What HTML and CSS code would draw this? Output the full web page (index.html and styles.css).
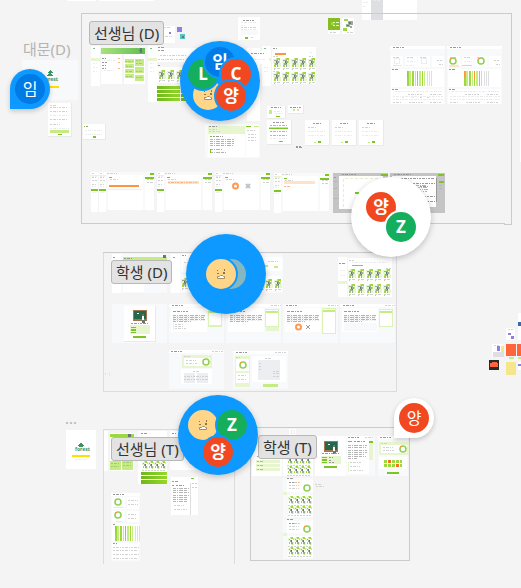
FILE: index.html
```html
<!DOCTYPE html>
<html lang="ko">
<head>
<meta charset="utf-8">
<title>디자인 캔버스</title>
<link rel="stylesheet" href="styles.css">
</head>
<body>
<main class="canvas">
<svg class="board" width="521" height="588" aria-hidden="true">
<defs>
<linearGradient id="banner"><stop offset="0" stop-color="#a9e27c"/><stop offset="1" stop-color="#62bd55"/></linearGradient>
<linearGradient id="bar"><stop offset="0" stop-color="#6fb81b"/><stop offset="1" stop-color="#94d82c"/></linearGradient>
<symbol id="book" viewBox="0 0 8 12" width="8" height="12">
<path class="lime" d="M4 0h3v2H4zM1 7h2v2H1zM5 7h2v1H5z"/><path class="soft" d="M0 1h3v4H0zM5 5h3v4H5z"/><path class="mid" d="M3 0h1v2H3zM6 2h1v3H6zM1 5h1v2H1z"/>
<path class="cover" d="M1 2h2v1H1zM3 2h2v3H3zM2 5h3v2H2zM5 3h1v2H5zM4 7h1v2H4z"/><path class="ink" d="M3 3h1v2H3zM4 5h1v1H4z"/><path class="tx" d="M1 10.500h6"/><path class="red" d="M1 11h1v1H1z"/>
</symbol>
<symbol id="books" viewBox="0 0 44 12" width="44" height="12"><use href="#book"/><use href="#book" x="9"/><use href="#book" x="18"/><use href="#book" x="26"/><use href="#book" x="35"/></symbol>
<symbol id="books4" viewBox="0 0 26 11" width="26" height="11">
<g id="b"><path class="lime" d="M3 0h2v2H3zM1 5h1v2H1z"/><path class="soft" d="M0 1h3v3H0zM3 5h3v3H3z"/><path class="mid" d="M2 0h1v1H2zM5 1h1v2H5zM4 6h1v2H4z"/><path class="cover" d="M1 2h1v1H1zM2 3h2v2H2zM3 5h2v2H3z"/><path class="ink" d="M3 3h1v2H3z"/><path class="tx" d="M0 9.500h5"/></g>
<use href="#b" x="6"/><use href="#b" x="12"/><use href="#b" x="18"/>
</symbol>
<symbol id="side" viewBox="0 0 9 40" width="9" height="40"><path class="w" d="M0 0h9v40H0z"/><path class="soft" d="M0 12h9v3H0z"/><path class="deep" d="M2 2h2v1H2z"/><path class="tx faint" d="M2 13.500h4M2 17.500h4M2 21.500h4M2 25.500h4"/></symbol>
<symbol id="chart" viewBox="0 0 26 15" width="26" height="15">
<path class="lime" d="M1 0h2v15H1zM6 0h2v15H6zM11 0h1v15h-1zM16 0h1v15h-1z"/><path class="mid" d="M3 0h2v15H3zM9 0h1v15H9zM13 0h2v15h-2zM18 0h1v15h-1z"/>
<path class="or" d="M1 0h1v7H1zM11 0h1v9h-1z"/><path class="gr" d="M21 0h1v15h-1zM23 0h1v15h-1zM25 0h1v15h-1z"/>
</symbol>
<symbol id="dash" viewBox="0 0 55 60" width="55" height="60">
<path class="p" d="M0 0h55v58H0z"/><path class="w" d="M0 0h55v3H0zM1 10h12v11H1zM15 10h12v11H15zM28 10h12v11H28zM42 10h12v11H42zM1 23h53v18H1zM1 43h53v15H1z"/>
<path class="tx dark" d="M3 1.500h11M2 23.500h7M2 43.500h6"/><path class="tx" d="M3 11.500h7M17 11.500h7M30 11.500h7M47 14.500h5M49 18.500h4M18 48.500h14M40 48.500h12M3 56.500h8M19 56.500h14M40 56.500h12"/><path class="tx faint" d="M17 15.500h8M16 19.500h8M5 45.500h47M3 50.500h50M3 53.500h50"/>
<use href="#chart" x="16" y="25"/>
</symbol>
<symbol id="ring" viewBox="0 0 8 8" width="8" height="8"><circle class="rg" cx="4" cy="4" r="3"/><path class="or" d="M1 1h2v1H1z"/></symbol>
<symbol id="form" viewBox="0 0 26 27" width="26" height="27"><path class="shade" d="M0 0h25v26H0z"/><path class="w" d="M0 0h24v25H0z"/><path class="tx dark" d="M8 3.500h8"/><path class="tx" d="M3 7.500h9"/><path class="tx faint" d="M3 11.500h18M3 15.500h18M3 11.500h4"/><path class="green" d="M13 21h3v2h-3z"/><path class="mid" d="M9 22h2v1H9z"/></symbol>
<symbol id="tools" viewBox="0 0 7 40" width="7" height="40"><path class="w" d="M0 0h7v40H0z"/><path class="tx" d="M1 1.500h3M1 5.500h4M1 8.500h5M1 12.500h4"/><path class="tx faint" d="M1 4.500h5M1 14.500h4M1 20.500h4"/><path class="soft" d="M0 3h7v1H0z"/><path class="green" d="M0 17h7v2H0z"/></symbol>
<symbol id="quiz" viewBox="0 0 55 40" width="55" height="40"><use href="#tools"/><path class="p" d="M7 0h48v38H7z"/><path class="w" d="M9 3h35v35H9zM46 3h9v35h-9z"/><path class="tx" d="M8 1.500h10M11 7.500h9M48 7.500h6M48 10.500h6"/><path class="green" d="M51 1h4v2h-4zM46 5h9v2h-9zM10 5h3v1h-3z"/></symbol>
<symbol id="reader" viewBox="0 0 55 40" width="55" height="40"><path class="p" d="M0 0h55v39H0z"/><path class="w" d="M0 0h55v3H0zM2 4h36v24H2z"/><path class="tx dark" d="M3 1.500h11M5 7.500h14"/><path class="green" d="M4 7h3v1H4z"/><path class="tx" d="M45 1.500h10"/><path class="tx dense" d="M4 11.500h32M4 13.500h31M4 15.500h32M4 17.500h18"/><path class="tx faint" d="M4 12.500h32M4 14.500h31M4 16.500h32"/><path class="edge" d="M39.500 5.500h13v17h-13z"/><path class="mid" d="M40 7h12v2H40z"/></symbol>
<symbol id="score" viewBox="0 0 30 13" width="30" height="13"><path class="soft" d="M0 0h30v13H0z"/><path class="w" d="M2 3h26v8H2z"/><path class="tx" d="M2 1.500h7M4 5.500h10M4 8.500h11"/><use href="#ring" x="20" y="3"/></symbol>
<symbol id="chalk" viewBox="0 0 15 13" width="15" height="13"><path class="wood" d="M0 0h14v11H0z"/><path class="chalk" d="M1 1h12v8H1z"/><path class="w" d="M4 3h2v1H4zM9 5h2v5H9z"/><path class="ink" d="M9 4h2v2H9zM9 10h3v3H9z"/></symbol>
<symbol id="lesson" viewBox="0 0 31 40" width="31" height="40"><path class="w" d="M0 0h31v40H0z"/><use href="#chalk" x="9" y="5"/><path class="tx dark" d="M7 17.500h17"/><path class="soft" d="M6 20h20v8H6z"/><path class="green" d="M7 21h5v1H7zM7 23h5v2H7zM7 26h5v1H7zM9 30h13v2H9z"/><path class="tx dark" d="M14 21.500h4M14 24.500h3M14 26.500h5"/></symbol>
<symbol id="report" viewBox="0 0 30 40" width="30" height="40"><path class="p" d="M0 0h30v40H0z"/><path class="w" d="M4 2h26v12H4zM5 17h25v22H5z"/><path class="tx dark" d="M4 .5h7"/><path class="tx" d="M6 4.500h12M6 7.500h10M6 10.500h10"/><use href="#ring" x="20" y="6"/><use href="#books4" x="5" y="18"/><use href="#books4" x="5" y="28"/><path class="soft" d="M0 14h4v3H0z"/></symbol>
</defs>

<!-- loose frames round the sections -->
<path class="w" d="M67 0h29v1H67zM99 0h55v1H99zM362 0h55v20h-55zM520 30h1v132h-1z"/><path class="gr" d="M371 0h12v20h-12z"/><path class="tx faint" d="M363 2.500h5M363 6.500h3M374 .5h6"/>
<path class="p" d="M22 60h56v40H22z"/>
<g class="leaf"><path d="M50 70l3 3h-2l2 3h-6l2-3h-2z"/><text class="brand" x="43" y="81">forest</text><path class="yl" d="M40 86h19v2H40z"/></g>
<path class="shade" d="M48 103h24v34H48z"/><path class="w" d="M48 103h23v33H48z"/><path class="tx" d="M50 105.500h6M50 107.500h18M50 111.500h18M50 119.500h18M50 124.500h10"/><path class="tx faint" d="M50 115.500h19M50 128.500h19"/><path class="mid" d="M50 130h19v3H50z"/><path class="green" d="M58 134h4v1h-4z"/>
<path class="w" d="M66 430h30v39H66z"/><g class="leaf"><path d="M81 442l3 4h-6zM79 445h4v2h-4z"/><text class="brand" x="75" y="451">forest</text><path class="yl" d="M72 455h18v2H72z"/></g><path class="tx faint" d="M75 459.500h12"/>

<!-- section 1 -->
<path class="sec" d="M81.500 223.500V13.500H511.500V224.500H504V223.500z"/>
<path class="w" d="M160 26h15v17h-15z"/><path class="violet" d="M169 32h2v2h-2zM177 27h5v5h-5z"/><path class="tx" d="M162 36.500h10M164 27.500h6"/><path class="teal" d="M180 34h5v5h-5z"/><path class="ink" d="M182 36h2v2h-2z"/>
<use href="#side" x="91" y="46"/><path fill="url(#banner)" d="M101 48h44v6h-44z"/><path class="ink" d="M140 48h2v5h-2zM139 50h2v1h-2z"/>
<path class="w" d="M101 54h21v30h-21zM124 54h21v30h-21z"/><path class="tx dark" d="M102 58.500h4M102 62.500h5M102 65.500h4M102 68.500h4"/><path class="tx orange" d="M118 58.500h3M118 62.500h3M118 68.500h3"/><path class="tx faint" d="M104 60.500h12M104 70.500h10"/>
<path class="mid" d="M125 59h9v4h-9zM125 64h9v4h-9zM125 69h9v4h-9zM125 74h9v4h-9zM135 59h9v7h-9zM135 67h9v6h-9zM135 75h9v6h-9z"/><path class="tx green-tx" d="M125 61.500h8M126 66.500h7M126 71.500h6M126 76.500h6M136 60.500h5M136 63.500h7M136 71.500h7M136 77.500h6"/>
<use href="#side" x="148" y="46"/><path class="w" d="M148 85h9v17h-9zM157 48h60v14h-60zM157 67h60v16h-60z"/><path class="tx dark" d="M158 47.500h7M158 50.500h7M158 65.500h3"/><path class="tx" d="M160 55.500h26M158 59.500h26"/><use href="#books" x="158" y="70"/><path fill="url(#bar)" d="M157 86h23v3h-23zM157 90h23v3h-23zM157 94h23v3h-23zM157 98h23v3h-23z"/><path fill="url(#bar)" d="M181 86h23v3h-23zM181 90h23v3h-23zM181 94h23v3h-23zM181 98h23v3h-23z"/>
<path class="w" d="M238 17h22v23h-22z"/><path class="tx dark" d="M243 20.500h12"/><path class="tx faint" d="M241 22.500h16M241 25.500h4M241 29.500h16"/><path class="tx" d="M241 27.500h16"/><path class="p" d="M241 30h17v5h-17z"/><path class="green" d="M245 37h3v2h-3z"/><path class="mid" d="M251 37h2v1h-2z"/>
<path class="w" d="M328 18h12v16h-12zM342 18h12v16h-12z"/><path class="green2" d="M328 18h12v12h-12z"/><path class="lime" d="M331 22h3v3h-3zM344 19h4v2h-4zM343 28h4v3h-4z"/><path class="tx white" d="M333 22.500h6M333 25.500h6"/><path class="cover" d="M348 21h5v4h-5zM346 24h4v3h-4zM350 26h2v2h-2z"/><path class="ink" d="M349 22h2v2h-2zM347 25h2v1h-2z"/><path class="tx" d="M330 32.500h7M347 32.500h6"/>
<path class="w" d="M247 48h13v14h-13zM247 63h13v58h-13zM240 51h29v13h-29z"/><use href="#side" x="262" y="46"/><path class="w" d="M272 47h44v37h-44zM247 51h22v13h-22z"/><path class="tx dark" d="M251 53.500h13M273 48.500h4"/><path class="tx faint" d="M249 67.500h8M249 72.500h8M249 80.500h8M310 52.500h3M250 59.500h16"/><path class="or" d="M275 53h11v2h-11z"/><path class="tx" d="M273 56.500h5M309 56.500h4M273 71.500h6"/><use href="#books" x="273" y="58"/><use href="#books" x="273" y="72"/>
<use href="#dash" x="390" y="46"/><use href="#dash" x="447" y="46"/><use href="#ring" x="449" y="57"/><use href="#ring" x="477" y="57"/><path class="soft-or" d="M393 65h9v1h-9zM449 65h10v2h-10zM402 97h2v1h-2zM412 97h2v1h-2z"/><path class="mid" d="M420 97h2v1h-2zM427 97h2v1h-2zM462 65h10v1h-10z"/><circle class="faint-ring" cx="397" cy="61" r="3"/><circle class="faint-ring" cx="424" cy="61" r="3"/>
<path class="shade" d="M83 124h23v16H83z"/><path class="w" d="M83 124h22v15H83z"/><path class="green" d="M84 126h1v1h-1zM93 136h3v2h-3z"/><path class="tx dark" d="M86 126.500h3"/><path class="tx faint" d="M85 130.500h18M85 134.500h18"/>
<path class="shade" d="M267 106h19v13h-19zM288 105h16v9h-16zM267 120h25v25h-25z"/><path class="w" d="M267 106h18v12h-18zM288 105h15v8h-15zM267 120h24v24h-24z"/><path class="tx dark" d="M271 107.500h10M290 107.500h11M273 122.500h11"/><path class="mid" d="M269 110h3v4h-3zM269 127h19v2h-19zM293 109h2v2h-2z"/><path class="green" d="M276 116h4v1h-4zM269 128h19v1h-19zM279 141h4v1h-4z"/><path class="tx green-tx" d="M270 125.500h17M270 131.500h17M270 135.500h17"/><path class="tx faint" d="M274 111.500h9M275 113.500h8M270 138.500h17"/><path class="pink" d="M297 109h2v2h-2z"/>
<use href="#form" x="305" y="120"/><use href="#form" x="332" y="120"/><use href="#form" x="359" y="120"/><path class="tx dark" d="M296 146.500h5M296 147.500h6"/>
<path class="p" d="M205 124h55v34h-55z"/><path class="w" d="M208 134h37v23h-37zM246 125h13v32h-13z"/><path class="soft" d="M208 126h37v8h-37z"/><path class="tx dark" d="M209 126.500h8M213 136.500h10"/><path class="tx dense" d="M210 139.500h24M210 141.500h24M210 143.500h24M210 145.500h23M210 149.500h12M210 152.500h17"/><path class="tx" d="M209 129.500h8M209 131.500h12M247 130.500h8M248 134.500h9M248 137.500h9M248 140.500h9"/><path class="green" d="M246 126h5v1h-5zM210 136h2v1h-2zM210 149h1v4h-1z"/><path class="mid" d="M254 126h5v1h-5z"/>
<use href="#tools" x="91" y="172"/><use href="#quiz" x="99" y="172"/><use href="#quiz" x="157" y="172"/><use href="#quiz" x="215" y="172"/><use href="#quiz" x="274" y="173"/>
<path class="or" d="M109 185h30v2h-30z"/><path class="soft-or" d="M168 181h31v3h-31zM284 181h31v3h-31z"/><path class="tx orange" d="M284 186.500h7M168 182.500h29"/><path class="soft" d="M108 189h34v1h-34z"/><circle class="oring" cx="235.500" cy="186" r="2.500"/><path class="cross" d="M246 184l4 4m0-4l-4 4"/>
<path class="dim" d="M333 173h55v40h-55zM390 173h55v40h-55z"/><path class="w" d="M339 176h44v33h-44zM392 176h44v31h-44z"/><path class="tx dark" d="M342 174.500h14M394 174.500h18M401 178.500h34M404 183.500h31M420 186.500h8M400 196.500h35M400 201.500h35"/><path class="green" d="M381 174h7v2h-7zM438 174h6v2h-6zM334 177h2v1h-2zM355 192h4v2h-4zM439 181h5v2h-5z"/><path class="tx dense" d="M416 185.500h11M417 187.500h11M418 189.500h10M419 191.500h8M334 181.500h4M334 188.500h4M334 198.500h5M439 185.500h4M439 188.500h4"/><path class="dash" d="M343.500 207V178.500H378"/><path class="stroke" d="M436.500 178v24"/>

<!-- section 2 -->
<path class="sec light" d="M103.500 252.500V391.500H396.500V252.500"/><path class="sec" d="M103 252.500H397"/>
<path class="p" d="M112 254h55v39h-55zM170 254h55v39h-55zM228 254h55v39h-55z"/><path class="w" d="M112 254h9v39h-9zM123 262h21v30h-21zM171 254h9v39h-9zM181 254h44v18h-44zM181 275h44v17h-44zM262 257h20v14h-20zM262 276h20v15h-20z"/><path class="mid" d="M123 257h44v3h-44zM265 265h3v2h-3zM274 266h4v2h-4z"/><path class="ink" d="M163 255h3v3h-3z"/><path class="tx dark" d="M113 257.500h3M124 258.500h8M173 257.500h3M182 255.500h4"/><path class="tx" d="M184 262.500h9M268 261.500h10M183 285.500h6"/><use href="#books" x="181" y="278"/><use href="#books" x="239" y="279"/>
<path class="w" d="M338 257h9v40h-9zM348 258h44v39h-44z"/><path class="tx dark" d="M339 263.500h7"/><path class="tx" d="M349 260.500h5M350 269.500h5M386 268.500h5"/><path class="tx faint" d="M340 270.500h5M340 275.500h5M352 262.500h36"/><path class="or" d="M352 265h11v1h-11z"/><path class="soft" d="M338 281h9v3h-9z"/><use href="#books" x="348" y="269"/><use href="#books" x="348" y="284"/>
<path class="p" d="M112 304h55v39h-55z"/><path class="shade" d="M124 306h32v36h-32z"/><path class="w" d="M124 306h31v35h-31z"/><use href="#chalk" x="133" y="310"/><path class="tx dark" d="M131 323.500h17M138 327.500h3M138 330.500h3M138 332.500h4"/><path class="soft" d="M130 325h20v9h-20z"/><path class="green" d="M131 327h5v1h-5zM131 329h5v2h-5zM131 332h5v1h-5zM133 336h13v2h-13z"/>
<use href="#reader" x="169" y="304"/><use href="#reader" x="226" y="304"/><use href="#reader" x="283" y="304"/><use href="#reader" x="340" y="304"/><path class="tx" d="M175 324.500h9M175 326.500h8M175 328.500h12"/><path class="soft" d="M173 323h1v7h-1zM266 327h13v4h-13z"/><path class="edge" d="M322.500 308.500h13v25h-13zM208.500 309.500h13v16h-13z"/><path class="mid" d="M323 310h12v2h-12zM209 311h12v2h-12z"/><circle class="oring" cx="298.500" cy="327" r="2.500"/><path class="cross dark-x" d="M306 325l4 4m0-4l-4 4"/><path class="p" d="M344 323h33v8h-33z"/>
<path class="p" d="M169 350h55v39h-55zM233 351h55v38h-55z"/><path class="w" d="M169 350h55v3h-55zM181 369h31v15h-31zM233 351h55v3h-55zM252 356h34v26h-34z"/><path class="tx dark" d="M171 351.500h12M236 352.500h11"/><path class="tx" d="M212 351.500h11M275 352.500h11M193 371.500h7M265 358.500h7"/><use href="#score" x="182" y="355"/><path class="tint" d="M184 373h11v10h-11zM197 373h11v10h-11zM258 360h22v20h-22z"/><path class="tx" d="M184 376.500h24M184 379.500h24M259 363.500h2M259 366.500h2M259 369.500h2M273 371.500h6M273 373.500h6M273 376.500h6"/><path class="soft" d="M235 356h15v31h-15z"/><path class="w" d="M236 359h13v12h-13zM236 373h13v10h-13z"/><use href="#ring" x="239" y="361"/><path class="tx" d="M236 357.500h4M238 375.500h9M238 379.500h9"/><path class="mid" d="M263 384h15v3h-15z"/><path class="soft-or" d="M109 372h1v4h-1z"/><path class="gr" d="M105 373h1v2h-1z"/>

<!-- section 3 -->
<path class="sec light" d="M103.500 564V429.500H234.500V564"/>
<path class="w" d="M104 431h4v40h-4zM110 433h24v38h-24zM138 431h29v53h-29zM170 431h29v39h-29z"/><path class="lime" d="M110 434h24v3h-24z"/><path class="ink" d="M128 434h3v4h-3z"/><path class="mid" d="M110 461h11v9h-11zM122 461h11v9h-11z"/><path class="tx green-tx" d="M111 463.500h9M111 466.500h8M123 462.500h9M123 465.500h8"/><path class="tx dark" d="M141 433.500h6M172 433.500h4"/><use href="#books4" x="142" y="461"/><path fill="url(#bar)" d="M141 472h26v3h-26zM141 476h26v3h-26zM141 480h26v4h-26z"/>
<path class="w" d="M171 477h27v38h-27z"/><path class="tx dark" d="M172 481.500h6M176 485.500h9"/><path class="tx dense" d="M173 488.500h16M173 490.500h15M173 492.500h16M173 495.500h16M173 497.500h15M173 499.500h14M173 501.500h15"/><path class="green" d="M172 485h2v1h-2zM191 478h3v1h-3z"/><path class="tx" d="M174 505.500h10M174 509.500h13M192 483.500h5M192 487.500h5"/><path class="gr" d="M190 483h1v32h-1z"/>
<path class="p" d="M111 493h29v68h-29z"/><path class="w" d="M111 493h29v3h-29zM112 497h13v12h-13zM127 497h12v12h-12zM112 511h13v11h-13zM127 511h12v11h-12zM112 524h27v17h-27zM112 543h27v17h-27z"/><path class="tx dark" d="M113 494.500h12M113 524.500h3M113 543.500h4"/><use href="#ring" x="114" y="498"/><use href="#ring" x="114" y="511"/><path class="soft-or" d="M113 507h11v1h-11zM116 521h6v1h-6z"/><path class="tx" d="M128 500.500h10M128 504.500h10M128 514.500h9M128 518.500h9M113 547.500h26M113 550.500h25M113 554.500h26M113 558.500h25"/><use href="#chart" x="114" y="526"/>

<!-- section 4 -->
<path class="sec" d="M250.500 427.500H409.500V560.500H250.500z"/>
<path class="w" d="M252 436h30v40h-30zM289 429h7v6h-7zM283 436h30v40h-30z"/><circle class="faint-ring" cx="293" cy="432" r="2"/><path class="soft" d="M256 460h24v3h-24zM256 464h24v3h-24zM256 468h24v3h-24z"/><path class="tx green-tx" d="M257 461.500h7M257 465.500h7M257 469.500h7"/><path class="green" d="M257 456h3v1h-3z"/><use href="#books4" x="287" y="456"/><use href="#books4" x="287" y="466"/>
<use href="#lesson" x="315" y="436"/><path class="p" d="M346 436h29v40h-29z"/><path class="w" d="M347 436h22v38h-22z"/><path class="tx dark" d="M348 437.500h11M354 441.500h11"/><path class="tx dense" d="M348 445.500h19M348 447.500h18M348 450.500h19M348 452.500h19M348 454.500h17M348 456.500h18M348 458.500h9"/><path class="green" d="M348 441h4v1h-4zM369 441h4v2h-4z"/><path class="tx" d="M350 462.500h12M350 466.500h10M350 470.500h13M365 437.500h9"/><path class="soft" d="M369 443h4v17h-4zM348 462h1v10h-1z"/>
<path class="p" d="M378 436h30v40h-30z"/><path class="w" d="M378 436h30v3h-30zM379 457h28v12h-28z"/><path class="tx dark" d="M380 437.500h11"/><use href="#score" x="379" y="442"/><path class="lime" d="M384 460h3v3h-3zM392 460h3v3h-3zM396 460h3v3h-3zM400 460h2v3h-2zM384 464h3v3h-3zM388 464h3v3h-3zM392 464h3v3h-3zM400 464h2v3h-2z"/><path class="deep-or" d="M388 460h3v3h-3zM396 464h3v3h-3z"/><path class="green" d="M387 472h12v2h-12z"/>
<use href="#report" x="283" y="478"/><use href="#report" x="283" y="519"/><path class="tx dark" d="M289 482.500h5M289 523.500h5"/><path class="tx orange" d="M295 482.500h4M295 523.500h4"/><path class="tx" d="M315 484.500h6M316 486.500h9"/>

<!-- frames by the right edge -->
<path class="w" d="M506 328h9v12h-9zM518 313h3v27h-3zM492 344h12v13h-12z"/><path class="violet" d="M508 333h3v2h-3zM511 336h3v3h-3zM497 346h3v5h-3zM519 364h2v3h-2z"/><path class="blue" d="M518 322h3v4h-3z"/><path class="tx" d="M508 329.500h5M494 345.500h5"/><path class="yl2" d="M501 346h3v6h-3zM506 362h10v13h-10z"/><path class="gr" d="M493 352h11v5h-11z"/><path class="tomato" d="M506 344h10v12h-10zM517 344h4v12h-4z"/><path class="mid" d="M509 357h5v2h-5zM518 357h3v2h-3z"/><path class="black" d="M489 360h10v10h-10z"/><path class="tomato" d="M490 366v-3h1l1-1h4l1 1h1v4h-8z"/><path class="w" d="M518 362h3v8h-3z"/><path class="violet" d="M518 364h3v2h-3z"/>
</svg>

<span class="name n1">대문(D)</span>
<span class="name n2">...</span>
<span class="label l1">선생님 (D)</span>
<span class="label l2">학생 (D)</span>
<span class="label l3">선생님 (T)</span>
<span class="label l4">학생 (T)</span>

<div class="pin blue-pin p1"><span class="av navy light-letter">임</span></div>
<div class="pin p2"><span class="av red light-letter">양</span></div>

<div class="cluster blue-cluster c1">
<span class="av sand a1"><svg class="face" viewBox="0 0 12 12"><use href="#mug"/></svg></span>
<span class="av jade a2">L</span><span class="av navy a3">임</span><span class="av red a4">C</span><span class="av red a5">양</span>
</div>
<div class="cluster c2"><span class="av red a6">양</span><span class="av jade a7">Z</span></div>
<div class="cluster blue-cluster c3"><span class="av ghost a8"></span>
<span class="av sand a9"><svg class="face" viewBox="0 0 12 12"><g id="mug"><path fill="#8a7351" d="M2 2h1v1H2zM9 1h1v2H9zM2 5h2v1H2zM8 4h2v2H8z"/><path fill="#fff" stroke="#a58d65" d="M2.500 8.500h2l1-1h2l1 1h1v2h-7z"/></g></svg></span></div>
<div class="cluster blue-cluster c4">
<span class="av sand a10"><svg class="face" viewBox="0 0 12 12"><use href="#mug"/></svg></span>
<span class="av jade a11">Z</span><span class="av red a12">양</span>
</div>
</main>
</body>
</html>
```
FILE: styles.css
```css
body {
  margin: 0;
  background: #f4f4f4;
  font-family: "Noto Sans", "Noto Sans CJK KR", sans-serif;
}
.canvas {
  position: relative;
  min-height: 100vh;
  overflow: hidden;
}
.board {
  display: block;
  shape-rendering: crispEdges;
}

/* thumbnail fills */
.w { fill: #fff; }
.p { fill: #f8f9fb; }
.shade { fill: #e9e9e9; }
.tint { fill: #eceef1; }
.lime { fill: #9bd93c; }
.mid { fill: #c4ec83; }
.soft { fill: #e7f6cf; }
.green { fill: #7dc526; }
.green2 { fill: #86bd22; }
.deep { fill: #7fbf8c; }
.ink { fill: #66776f; }
.cover { fill: #9cac98; }
.red { fill: #f3b4a6; }
.or { fill: #ff9340; }
.soft-or { fill: #ffe3c8; }
.deep-or { fill: #f8702a; }
.gr { fill: #dedfe2; }
.dim { fill: #c4c4c4; }
.leaf { fill: #3a9462; }
.brand { font-size: 5px; font-weight: 700; }
.yl { fill: #ffdf00; }
.yl2 { fill: #f5e68c; }
.violet { fill: #8f7fe0; }
.teal { fill: #58c5c4; }
.blue { fill: #3569b0; }
.pink { fill: #ffc6d6; }
.wood { fill: #a8744d; }
.chalk { fill: #23694a; }
.tomato { fill: #ff6538; }
.black { fill: #292929; }

/* thumbnail strokes */
.tx {
  fill: none;
  stroke: #d2d2d2;
  stroke-dasharray: 2 1 3 1 1 1;
}
.dark { stroke: #999; }
.faint { stroke: #ebebeb; }
.dense { stroke: #b4b4b4; stroke-dasharray: 3 1 1 1 4 1; }
.orange { stroke: #ffb57e; }
.green-tx { stroke: #a3cc6a; }
.white { stroke: #eef7d8; }
.edge { fill: #fff; stroke: #dcf3b6; }
.rg { fill: none; stroke: #92d058; stroke-width: 1.6; shape-rendering: auto; }
.faint-ring { fill: none; stroke: #eee; }
.oring { fill: none; stroke: #ff9a55; stroke-width: 2; shape-rendering: auto; }
.cross { stroke: #bcc4cc; stroke-width: 2; shape-rendering: auto; }
.dark-x { stroke: #999; stroke-width: 1; }
.dash { fill: none; stroke: #e6efc8; stroke-dasharray: 3 2; }
.stroke { stroke: #999; }
.sec { fill: none; stroke: #cbcbcb; }
.sec.light { stroke: #dcdcdc; }

/* section names */
.name, .label, .pin, .cluster { position: absolute; }
.name {
  color: #b3b3b3;
  font-size: 15px;
  line-height: 20px;
}
.n1 { left: 23px; top: 39px; }
.n2 { left: 65px; top: 408px; }
.label {
  box-sizing: border-box;
  padding: 0 4px;
  border: 1px solid #b8b8b8;
  border-radius: 3px;
  background: #e3e3e3;
  color: #333;
  font-size: 15px;
  line-height: 22px;
  white-space: nowrap;
}
.l1 { left: 89px; top: 21px; }
.l2 { left: 111px; top: 260px; }
.l3 { left: 111px; top: 437px; }
.l4 { left: 258px; top: 435px; }

/* collaborators */
.pin {
  display: grid;
  place-items: center;
  width: 40px;
  height: 40px;
  border-radius: 20px 20px 20px 0;
  background: #fff;
  box-shadow: 0 2px 5px rgb(0 0 0 / 20%);
}
.blue-pin, .blue-cluster { background: #0d99ff; --ring: #0d99ff; }
.p1 { left: 10px; top: 69px; }
.p2 { left: 394px; top: 398px; }
.cluster {
  width: 80px;
  height: 80px;
  border-radius: 50%;
  background-color: #fff;
  box-shadow: 0 2px 6px rgb(0 0 0 / 22%);
}
.blue-cluster { background-color: #0d99ff; }
.c1 { left: 180px; top: 41px; }
.c2 { left: 351px; top: 177px; }
.c3 { left: 186px; top: 234px; }
.c4 { left: 178px; top: 395px; }
.av {
  display: grid;
  place-items: center;
  width: 30px;
  height: 30px;
  border-radius: 50%;
  color: #fff;
  font-size: 17px;
  font-weight: 700;
  line-height: 28px;
}
.light-letter { font-size: 16px; font-weight: 400; }
.cluster .av {
  position: absolute;
  box-shadow: 0 0 0 2px var(--ring, #fff);
}
.navy { background: #007be5; }
.red { background: #f24822; }
.jade { background: #14ae5c; }
.sand { background: #ffd588; }
.cluster .ghost { background: #86b7c0; box-shadow: none; }
.face { width: 12px; height: 12px; }
.a1 { left: 13px; top: 39px; }
.a2 { left: 8px; top: 18px; }
.a3 { left: 25px; top: 6px; }
.a4 { left: 41px; top: 18px; }
.a5 { left: 36px; top: 40px; }
.a6 { left: 15px; top: 15px; }
.a7 { left: 35px; top: 35px; }
.a8 { left: 30px; top: 25px; }
.a9 { left: 20px; top: 25px; }
.a10 { left: 10px; top: 15px; }
.a11 { left: 39px; top: 15px; }
.a12 { left: 25px; top: 42px; }
```
